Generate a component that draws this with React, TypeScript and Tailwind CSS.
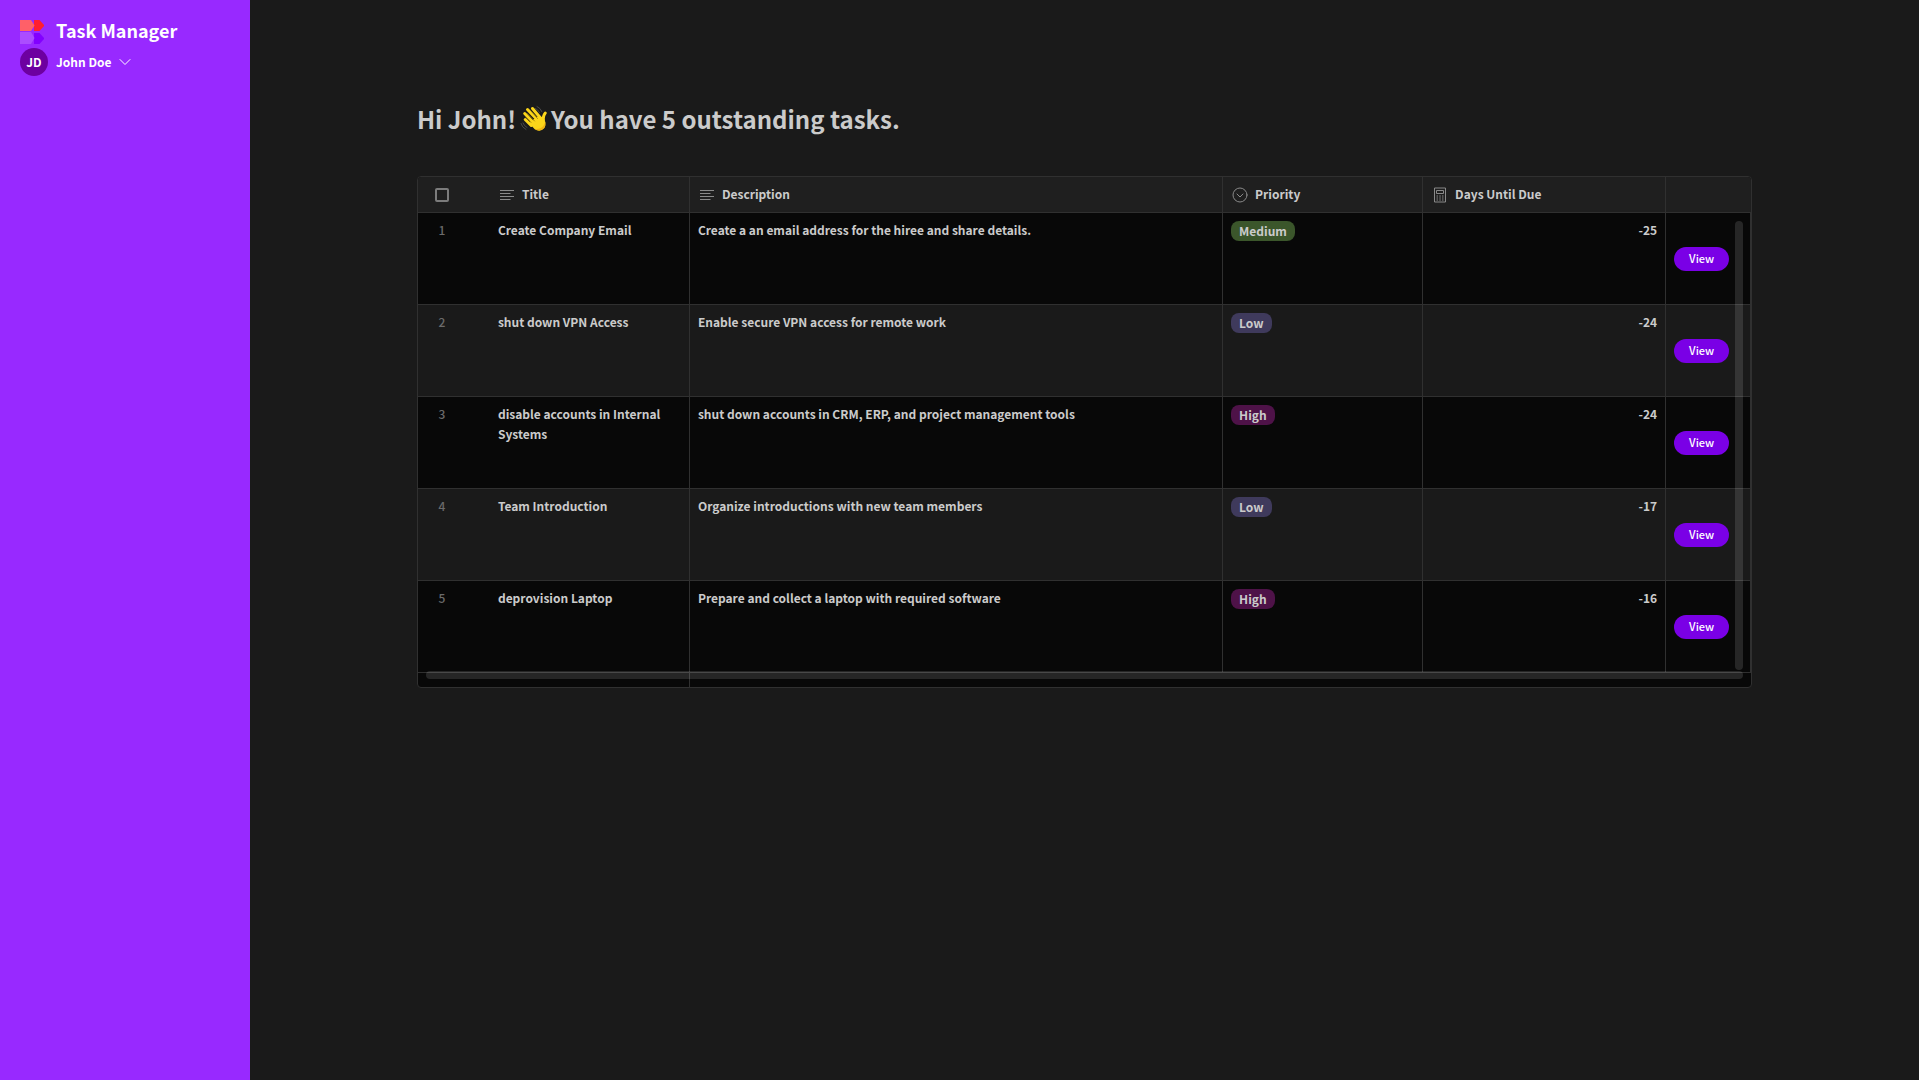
import React, { useState } from 'react';

interface Task {
  title: string;
  description: string;
  priority: 'Low' | 'Medium' | 'High';
  daysUntilDue: number;
}

const TASKS: Task[] = [
  { title: 'Create Company Email', description: 'Create a an email address for the hiree and share details.', priority: 'Medium', daysUntilDue: -25 },
  { title: 'shut down VPN Access', description: 'Enable secure VPN access for remote work', priority: 'Low', daysUntilDue: -24 },
  { title: 'disable accounts in Internal Systems', description: 'shut down accounts in CRM, ERP, and project management tools', priority: 'High', daysUntilDue: -24 },
  { title: 'Team Introduction', description: 'Organize introductions with new team members', priority: 'Low', daysUntilDue: -17 },
  { title: 'deprovision Laptop', description: 'Prepare and collect a laptop with required software', priority: 'High', daysUntilDue: -16 },
];

const priorityStyles: Record<Task['priority'], string> = {
  Low: 'bg-[#3f3a5c]',
  Medium: 'bg-[#3b562b]',
  High: 'bg-[#4e1248]',
};

const Logo = () => (
  <svg aria-hidden="true" viewBox="0 0 24 24" className="h-6 w-6 shrink-0">
    <path d="M14 0h5.500l4.500 5v1l-4.500 5H14z" fill="#ff1f2f" />
    <path d="M0 0h11l3.500 5.500L11 11H0z" fill="#ff6068" />
    <path d="M14 13h5.500l4.500 5v1l-4.500 5H14z" fill="#8200ff" />
    <path d="M0 12h11l3.500 6L11 24H0z" fill="#ab4dff" />
  </svg>
);

const WavingHand = () => (
  <svg role="img" aria-label="waving hand" viewBox="0 0 28 28" className="-mx-0.5 inline-block h-7 w-7 align-[-4px]">
    <g fill="none" stroke="#4a4a4a" strokeWidth="1" strokeLinecap="round">
      <path d="M17 1.500q3.500 1.500 4.800 5M15.500 3.500q2.500 1 4 4" />
      <path d="M1 18.500q1 4 5 6M3 18q1 3 4 4.500" />
    </g>
    <g fill="none" stroke="#fcd61a" strokeWidth="3" strokeLinecap="round">
      <path d="M5.200 14.500l6 6M4.700 8.500l9 9.500M7.500 4.500l10 10.500M12.500 3.500l8 9.500" />
      <path d="M25.300 8q-2.300 2.500-2 8" />
    </g>
    <path d="M8.500 17.500L19.500 10.500Q21.500 13 23.300 12Q27 19 24.300 23Q20 28 14.500 24z" fill="#fcd61a" />
    <path d="M14 23.700Q20 27.500 24.300 23Q26 20 25.400 16Q24.500 21 21 23Q17.500 24.500 14 23.700z" fill="#f0b310" />
    <g fill="none" stroke="#8a6d08" strokeWidth=".7" strokeLinecap="round">
      <path d="M6 12.500l5 5M7.500 8.500l7 7.500M11 6l6.500 7.500" />
    </g>
  </svg>
);

const TextIcon = () => (
  <svg aria-hidden="true" viewBox="0 0 14 14" className="h-3.5 w-3.5 shrink-0" fill="none" stroke="currentColor">
    <path d="M0 2.500h14M0 5.500h10.500M0 8.500h14M0 11.500h10.500" />
  </svg>
);

const SelectIcon = () => (
  <svg aria-hidden="true" viewBox="0 0 16 16" className="-mx-px h-4 w-4 shrink-0" fill="none" stroke="currentColor" strokeLinecap="round" strokeLinejoin="round">
    <circle cx="8" cy="8" r="7" />
    <path d="M5 7l3 3 3-3" />
  </svg>
);

const CalculatorIcon = () => (
  <svg aria-hidden="true" viewBox="0 0 14 16" className="h-4 w-3.5 shrink-0" fill="none" stroke="currentColor">
    <path d="M1.500 1h11v14h-11zM3.500 3.500h7v3h-7z" />
    <path d="M3.500 9h1.500M6.300 9h1.500M9 9h1.500M3.500 11h1.500M6.300 11h1.500M9 11h1.500M3.500 13h1.500M6.300 13h1.500M9 13h1.500" />
  </svg>
);

const ColumnHeading = ({ icon, label }: { icon: React.ReactNode; label: string }) => (
  <div className="flex items-center gap-2 px-2.5">
    <span className="text-[#8a8a8a]">{icon}</span>
    <span className="pb-0.5">{label}</span>
  </div>
);

const Sidebar = () => (
  <aside className="w-[250px] shrink-0 bg-[#9829ff] px-5 pt-4 text-white">
    <div className="flex items-center gap-3">
      <Logo />
      <h1 className="pb-1 text-lg leading-7 font-bold">Task Manager</h1>
    </div>
    <button type="button" className="flex items-center gap-2 text-xs leading-7 font-bold">
      <span className="flex h-7 w-7 items-center justify-center rounded-full bg-[#6d00a0]">JD</span>
      John Doe
      <svg aria-hidden="true" viewBox="0 0 12 12" className="h-3 w-3" fill="none" stroke="currentColor" strokeLinecap="round">
        <path d="M1 3.500l5 5 5-5" />
      </svg>
    </button>
  </aside>
);

const TaskTable = () => {
  const [allSelected, setAllSelected] = useState<boolean>(false);

  const cell = 'border-r border-b border-[#303030] px-2 align-top';
  const heading = 'h-9 border-r border-b border-[#303030] p-0 text-left font-bold';

  return (
    <div className="relative overflow-hidden rounded-sm border border-[#303030] bg-[#080808]">
      <table className="w-full table-fixed border-separate border-spacing-0 text-xs leading-5 font-bold">
        <colgroup>
          <col className="w-[72px]" />
          <col className="w-[200px]" />
          <col />
          <col className="w-[200px]" />
          <col className="w-[243px]" />
          <col className="w-[85px]" />
        </colgroup>
        <thead className="bg-[#1f1f1f]">
          <tr>
            <th className="h-9 border-b border-[#303030] p-0">
              <div className="flex w-12 justify-center">
                <input
                  type="checkbox"
                  aria-label="Select all tasks"
                  checked={allSelected}
                  onChange={(e) => setAllSelected(e.target.checked)}
                  className="h-3.5 w-3.5 appearance-none rounded-[2px] border-2 border-[#7c7c7c] checked:bg-[#7c7c7c]"
                />
              </div>
            </th>
            <th className={heading}><ColumnHeading icon={<TextIcon />} label="Title" /></th>
            <th className={heading}><ColumnHeading icon={<TextIcon />} label="Description" /></th>
            <th className={heading}><ColumnHeading icon={<SelectIcon />} label="Priority" /></th>
            <th className={heading}><ColumnHeading icon={<CalculatorIcon />} label="Days Until Due" /></th>
            <td className="border-b border-[#303030]" />
          </tr>
        </thead>
        <tbody>
          {TASKS.map((task, index) => (
            <tr key={task.title} className="h-[92px] even:bg-[#1a1a1a]">
              <td className="border-b border-[#303030] p-0 pt-[7px] align-top font-medium text-[#6b6b6b]">
                <div className="w-12 text-center">{index + 1}</div>
              </td>
              <td className={`${cell} pt-[7px]`}>{task.title}</td>
              <td className={`${cell} pt-[7px]`}>{task.description}</td>
              <td className={`${cell} pt-2`}>
                <span className={`inline-block rounded-lg px-2 ${priorityStyles[task.priority]}`}>
                  {task.priority}
                </span>
              </td>
              <td className={`${cell} pt-[7px] text-right`}>{task.daysUntilDue}</td>
              <td className="border-r border-b border-[#303030] px-2 align-middle">
                <button type="button" className="block h-6 rounded-full bg-[#7a00e6] px-[15px] pb-0.5 text-[11px] font-medium text-white">
                  View
                </button>
              </td>
            </tr>
          ))}
        </tbody>
      </table>
      <div className="h-3.5 w-[272px] border-r border-[#303030]" />

      {/* Overlay scrollbars */}
      <div aria-hidden="true" className="absolute top-11 right-2 bottom-[17px] w-2 rounded-full bg-white/12" />
      <div aria-hidden="true" className="absolute right-2 bottom-2 left-2 h-2 rounded-full bg-white/12" />
    </div>
  );
};

const App = () => {
  return (
    <div className="flex min-h-screen bg-[#1a1a1a] font-['Noto_Sans_CJK_SC',sans-serif] text-[#cbcbcb]">
      <Sidebar />
      <main className="flex-1 pt-[100px]">
        <div className="mx-auto w-4/5">
          <h2 className="mb-[38px] text-2xl leading-[38px] font-bold">
            Hi John! <WavingHand /> You have {TASKS.length} outstanding tasks.
          </h2>
          <TaskTable />
        </div>
      </main>
    </div>
  );
};

export default App;
